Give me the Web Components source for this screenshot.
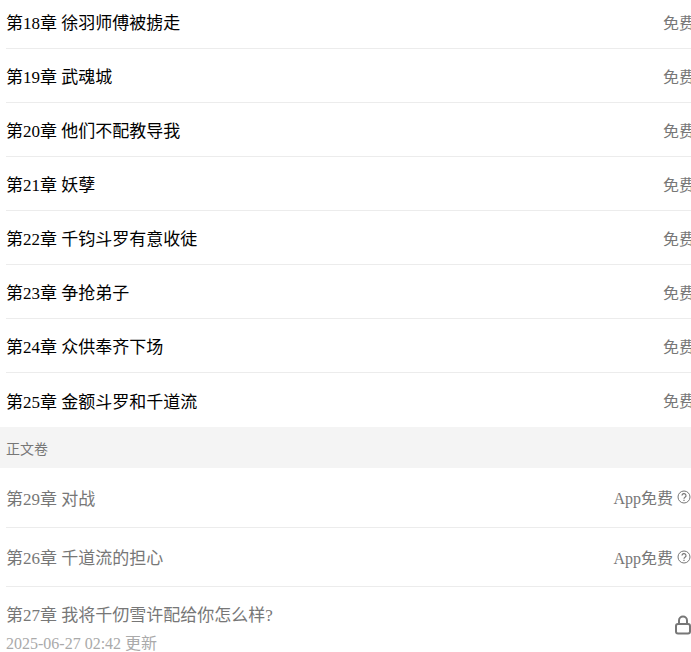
<!DOCTYPE html>
<html lang="zh">
<head>
<meta charset="utf-8">
<title>目录</title>
<style>
  html, body { margin: 0; height: 100%; overflow: hidden; background: #fff; }
  body { font-family: "Liberation Serif", "Noto Sans CJK SC", serif; }
</style>
</head>
<body>
<chapter-list>
  <chapter-row price="免费">第18章 徐羽师傅被掳走</chapter-row>
  <chapter-row price="免费">第19章 武魂城</chapter-row>
  <chapter-row price="免费">第20章 他们不配教导我</chapter-row>
  <chapter-row price="免费">第21章 妖孽</chapter-row>
  <chapter-row price="免费">第22章 千钧斗罗有意收徒</chapter-row>
  <chapter-row price="免费">第23章 争抢弟子</chapter-row>
  <chapter-row price="免费">第24章 众供奉齐下场</chapter-row>
  <chapter-row price="免费" last>第25章 金额斗罗和千道流</chapter-row>
  <volume-title>正文卷</volume-title>
  <chapter-row kind="app" price="App免费">第29章 对战</chapter-row>
  <chapter-row kind="app" price="App免费">第26章 千道流的担心</chapter-row>
  <chapter-row kind="locked" updated="2025-06-27 02:42 更新" last>第27章 我将千仞雪许配给你怎么样?</chapter-row>
</chapter-list>

<script>
class ChapterList extends HTMLElement {
  constructor() {
    super();
    this.attachShadow({ mode: "open" });
    this.shadowRoot.innerHTML = `
      <style>
        :host { display: flex; flex-direction: column; margin-top: -5px; }
      </style>
      <slot></slot>
    `;
  }
}

class VolumeTitle extends HTMLElement {
  constructor() {
    super();
    this.attachShadow({ mode: "open" });
    this.shadowRoot.innerHTML = `
      <style>
        :host {
          display: flex;
          align-items: center;
          height: 41px;
          padding-left: 6px;
          background: #f4f4f4;
          color: #777;
          font-size: 14px;
        }
      </style>
      <slot></slot>
    `;
  }
}

class ChapterRow extends HTMLElement {
  constructor() {
    super();
    this.attachShadow({ mode: "open" });
  }

  connectedCallback() {
    const kind = this.getAttribute("kind") || "free";
    const updated = this.getAttribute("updated");
    const price = this.getAttribute("price");
    this.shadowRoot.innerHTML = `
      <style>
        :host { display: block; padding-left: 6px; }
        .row {
          display: flex;
          align-items: center;
          justify-content: space-between;
          box-sizing: border-box;
          height: 54px;
          border-bottom: 1px solid #ececec;
          color: #000;
          font-size: 17px;
        }
        :host([kind]) .row { color: #777; height: 59.5px; }
        :host([kind="locked"]) .row { height: 66px; align-items: flex-start; padding-top: 14px; }
        :host([last]) .row { border-bottom: 0; }
        .side {
          flex: none;
          display: flex;
          align-items: center;
          gap: 4px;
          color: #777;
          font-size: 16px;
        }
        .free { width: 28px; white-space: nowrap; }
        .time { margin-top: 4px; color: #aaa; font-size: 16px; }
        svg { display: block; flex: none; }
        .lock { margin-top: 14px; }
      </style>
      <div class="row">
        <div>
          <div><slot></slot></div>
          ${updated ? `<div class="time">${updated}</div>` : ""}
        </div>
        ${this.#side(kind, price)}
      </div>
    `;
  }

  #side(kind, price) {
    if (kind === "locked") {
      return `<svg class="lock" width="16" height="20" viewBox="0 0 16 20" fill="none" stroke="#777" stroke-width="2">
        <path d="M4 9V5.5a4 4 0 0 1 8 0V9"/>
        <rect x="1" y="9" width="14" height="9.5" rx="2"/>
      </svg>`;
    }
    if (kind === "app") {
      return `<div class="side">${price}
        <svg width="14" height="14" viewBox="0 0 14 14" fill="none" stroke="#777">
          <circle cx="7" cy="7" r="6"/>
          <path d="M5 5.6a2 2 0 1 1 3 1.7c-.7.4-1 .7-1 1.5" stroke-width="1.2"/>
          <path d="M7 9.8v1.2" stroke-width="1.2"/>
        </svg>
      </div>`;
    }
    return `<div class="side"><span class="free">${price}</span></div>`;
  }
}

customElements.define("chapter-list", ChapterList);
customElements.define("volume-title", VolumeTitle);
customElements.define("chapter-row", ChapterRow);
</script>
</body>
</html>
